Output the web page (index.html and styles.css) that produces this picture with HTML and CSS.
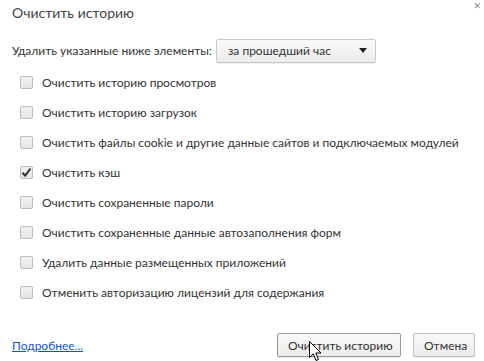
FILE: index.html
```html
<!DOCTYPE html>
<html lang="ru">
<head>
  <meta charset="UTF-8" />
  <title>Очистить историю</title>
  <link rel="stylesheet" href="styles.css">
</head>
<body>
  <div class="dialog">
    <div class="dialog-header">
      <h1 class="dialog-title">Очистить историю</h1>
      <span class="close-btn">&#x2715;</span>
    </div>

    <div class="period-row">
      <label class="period-label">Удалить указанные ниже элементы:</label>
      <div class="select-box">
        <span>за прошедший час</span>
        <span class="select-arrow"></span>
      </div>
    </div>

    <ul class="options">
      <li><span class="checkbox"></span>Очистить историю просмотров</li>
      <li><span class="checkbox"></span>Очистить историю загрузок</li>
      <li><span class="checkbox"></span>Очистить файлы cookie и другие данные сайтов и подключаемых модулей</li>
      <li><span class="checkbox checked">
        <svg width="11" height="11" viewBox="0 0 11 11"><path d="M1.5 5.8 L4.2 8.6 L9.5 1.5" fill="none" stroke="#333" stroke-width="2"/></svg>
      </span>Очистить кэш</li>
      <li><span class="checkbox"></span>Очистить сохраненные пароли</li>
      <li><span class="checkbox"></span>Очистить сохраненные данные автозаполнения форм</li>
      <li><span class="checkbox"></span>Удалить данные размещенных приложений</li>
      <li><span class="checkbox"></span>Отменить авторизацию лицензий для содержания</li>
    </ul>

    <div class="dialog-footer">
      <a href="#" class="more-link">Подробнее...</a>
      <div class="buttons">
        <button class="btn btn-primary">Очистить историю</button>
        <button class="btn btn-cancel">Отмена</button>
      </div>
      <svg class="cursor" width="14" height="22" viewBox="0 0 14 22">
        <path d="M0.5 0.5 L0.5 16.5 L4.3 12.8 L7 19.5 L9.5 18.5 L6.8 12 L12 12 Z" fill="#fff" stroke="#000" stroke-width="1"/>
      </svg>
    </div>
  </div>
</body>
</html>
```

FILE: styles.css
```css
* {
  box-sizing: border-box;
}
html, body {
  margin: 0;
  padding: 0;
  background: #fff;
  font-family: 'Lato', 'Open Sans', sans-serif;
  font-size: 12px;
  color: #333;
}

.dialog {
  width: 484px;
  height: 361px;
  padding: 0 12px;
  display: flex;
  flex-direction: column;
  white-space: nowrap;
}

.dialog-header {
  display: flex;
  justify-content: space-between;
  align-items: flex-start;
  height: 38px;
}

.dialog-title {
  margin: 4px 0 0;
  font-size: 14px;
  font-weight: 400;
  color: #444;
}

.close-btn {
  margin: 1px -9px 0 0;
  font-family: 'DejaVu Sans', sans-serif;
  font-size: 9px;
  font-weight: 700;
  color: #888;
}

.period-row {
  display: flex;
  align-items: center;
  gap: 4px;
  height: 25px;
}

.select-box {
  width: 160px;
  height: 24px;
  padding: 0 8px 0 11px;
  display: flex;
  align-items: center;
  justify-content: space-between;
  border: 1px solid #c8c8c8;
  border-radius: 2px;
  background: linear-gradient(to bottom, #f9f9f9, #ececec);
  box-shadow: 0 1px 0 rgba(0, 0, 0, 0.06);
}

.select-arrow {
  width: 0;
  height: 0;
  border-left: 4.5px solid transparent;
  border-right: 4.5px solid transparent;
  border-top: 5px solid #222;
}

.options {
  list-style: none;
  margin: 4px 0 0;
  padding: 0 0 0 8px;
}

.options li {
  display: flex;
  align-items: center;
  height: 30px;
}

.checkbox {
  width: 13px;
  height: 13px;
  margin-right: 9px;
  flex-shrink: 0;
  display: flex;
  align-items: center;
  justify-content: center;
  border: 1px solid #bcbcbc;
  border-radius: 2px;
  background: linear-gradient(to bottom, #f2f2f2, #e4e4e4);
}

.dialog-footer {
  position: relative;
  margin-top: auto;
  height: 38px;
  display: flex;
  align-items: center;
  justify-content: space-between;
  padding-top: 6px;
}

.more-link {
  color: #15c;
  text-decoration: underline;
}

.buttons {
  display: flex;
  gap: 12px;
  margin-right: -3px;
}

.btn {
  height: 24px;
  padding: 0 10px;
  font-family: inherit;
  font-size: 12px;
  color: #333;
  border: 1px solid #c0c0c0;
  border-radius: 2px;
  background: linear-gradient(to bottom, #fafafa, #ebebeb);
  box-shadow: 0 1px 0 rgba(0, 0, 0, 0.08);
}

.btn-primary {
  width: 124px;
  border-color: #999;
}

.btn-cancel {
  width: 62px;
}

.cursor {
  position: absolute;
  left: 297px;
  top: 18px;
}
```
